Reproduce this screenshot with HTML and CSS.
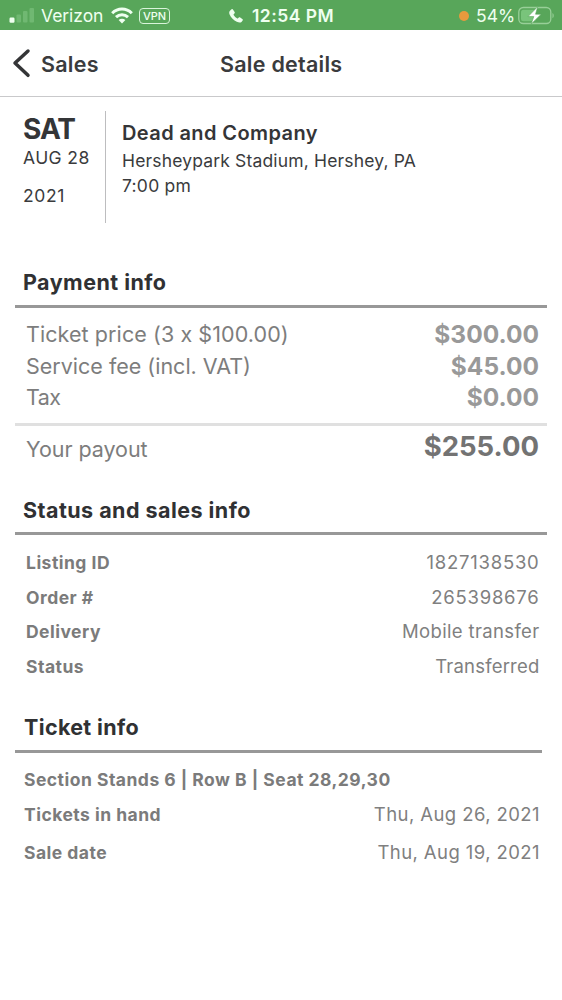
FILE: index.html
```html
<!DOCTYPE html>
<html lang="en">
<head>
<meta charset="utf-8">
<title>Sale details</title>
<link rel="stylesheet" href="styles.css">
</head>
<body>
<header class="status-bar">
  <div class="status-left">
    <svg class="signal" width="26" height="17" viewBox="0 0 26 17"><rect x=".5" y="11.500" width="5" height="5.300" rx="1.200" fill="#effff0"/><g fill="#70b872"><rect x="7.500" y="8.500" width="4.500" height="8" rx="1"/><rect x="14" y="5" width="4.500" height="11.500" rx="1"/><rect x="20.500" y="2" width="4.500" height="14.500" rx="1"/></g></svg>
    <span class="carrier">Verizon</span>
    <svg class="wifi" width="22" height="17" viewBox="0 0 22 17" fill="none" stroke="#effff0" stroke-width="3"><path d="M1.200 6.300C6.800.7 15.200.7 20.800 6.300"/><path d="M5 10.100c3.500-3.300 8.500-3.300 12 0"/><path d="M11 16.500 7.600 13.100c2-1.700 4.800-1.700 6.800 0z" fill="#effff0" stroke="none"/></svg>
    <span class="vpn">VPN</span>
  </div>
  <div class="status-time">
    <svg width="14" height="14" viewBox="0 0 14 14" fill="#effff0"><path d="M1.200 1.400 2.600.3C3.200-.1 3.700.1 4.100.7l1.500 2.200c.4.700.3 1.100-.3 1.700l-.6.6c-.3.3-.2.600.1 1.100.8 1.200 1.900 2.300 3.100 3 .5.300.8.300 1.100 0l.6-.6c.5-.5 1-.6 1.600-.2l2.100 1.500c.7.500.8 1 .3 1.600l-1.100 1.300c-1 1-2.800.8-4.700-.1C4.700 11.300 1.900 8.500.6 5.500-.1 3.700.1 2.300 1.200 1.400z"/></svg>
    <span>12:54 PM</span>
  </div>
  <div class="status-right">
    <span class="mic-dot"></span>
    <span class="percent">54%</span>
    <svg class="battery" width="37" height="20" viewBox="0 0 37 20"><rect x=".8" y="1.500" width="32" height="16" rx="4.500" fill="none" stroke="#98cf98" stroke-width="1.300"/><rect x="3" y="3.800" width="15" height="11.400" rx="2.500" fill="#79c47b"/><path d="M34.500 7c1.600.8 1.600 4.500 0 5.300z" fill="#98cf98"/><path d="M19.800.6 10 10.600h5.800l-2.600 7.400L23.200 8.200h-5.700z" fill="#fff" stroke="#58a65a" stroke-width=".6"/></svg>
  </div>
</header>
<nav class="nav-bar">
  <a class="back"><svg width="19" height="30" viewBox="0 0 19 30" fill="none" stroke="#343537" stroke-width="3.500" stroke-linecap="round" stroke-linejoin="round"><path d="M16 3 3 15l13 12.300"/></svg><span>Sales</span></a>
  <h1>Sale details</h1>
</nav>
<main>
  <section class="event">
    <div class="date"><strong>SAT</strong><span class="day">AUG 28</span><span class="year">2021</span></div>
    <div class="event-info"><h2>Dead and Company</h2><p class="venue">Hersheypark Stadium, Hershey, PA</p><p class="hour">7:00 pm</p></div>
  </section>
  <section class="payment">
    <h3>Payment info</h3>
    <dl class="prices">
      <div><dt class="ticket-price">Ticket price (3 x $100.00)</dt><dd>$300.00</dd></div>
      <div><dt>Service fee (incl. VAT)</dt><dd>$45.00</dd></div>
      <div><dt class="tax">Tax</dt><dd>$0.00</dd></div>
    </dl>
    <div class="payout"><span class="payout-label">Your payout</span><strong>$255.00</strong></div>
  </section>
  <section class="sales">
    <h3>Status and sales info</h3>
    <dl class="details">
      <div><dt>Listing ID</dt><dd class="number">1827138530</dd></div>
      <div><dt>Order #</dt><dd class="number">265398676</dd></div>
      <div><dt>Delivery</dt><dd>Mobile transfer</dd></div>
      <div><dt>Status</dt><dd class="state">Transferred</dd></div>
    </dl>
  </section>
  <section class="ticket">
    <h3>Ticket info</h3>
    <p class="seats">Section Stands 6 | Row B | Seat 28,29,30</p>
    <dl class="details ticket-dates">
      <div><dt>Tickets in hand</dt><dd>Thu, Aug 26, 2021</dd></div>
      <div><dt>Sale date</dt><dd>Thu, Aug 19, 2021</dd></div>
    </dl>
  </section>
</main>
</body>
</html>
```
FILE: styles.css
```css
* { box-sizing: border-box; margin: 0; padding: 0; }
body { width: 562px; min-height: 1000px; background: #fff; color: #3a3b3d; font-family: Inter, "Liberation Sans", sans-serif; white-space: nowrap; }
.status-bar { height: 30px; padding: 1px 6px 0 9px; background: #58a65a; color: #effff0; display: grid; grid-template-columns: 220px 1fr 97px; align-items: center; font-size: 17.500px; line-height: 28px; }
.status-left, .status-time, .status-right { display: flex; align-items: center; }
.signal { margin-right: 6px; margin-top: -2px; }
.carrier { width: 63px; letter-spacing: -.05px; }
.wifi { margin-left: 7px; }
.vpn { margin-left: 6px; width: 31px; height: 16px; border: 1.500px solid #d9f4da; border-radius: 4px; font-size: 11px; font-weight: 500; line-height: 14px; text-align: center; }
.status-time { gap: 9px; font-weight: 600; letter-spacing: .45px; }
.mic-dot { flex: none; width: 10px; height: 10px; border-radius: 50%; background: #e79a3d; }
.percent { flex: none; margin-left: 7px; width: 39px; }
.battery { flex: none; margin-left: 3px; }
.nav-bar { height: 67px; border-bottom: 1px solid #c9c9cb; display: grid; grid-template-columns: 208px 1fr; padding: 1px 12px 0; align-items: center; line-height: 30px; }
.nav-bar h1, .back { font-size: 21.500px; font-weight: 600; letter-spacing: .26px; }
.back { display: flex; align-items: center; gap: 10px; }
.back svg { margin-top: -2px; }
.event { height: 157px; padding: 14px 0 0 23px; display: flex; }
.date { width: 83px; height: 112px; border-right: 1px solid #bdbdbf; display: flex; flex-direction: column; }
.date strong { font-size: 28px; line-height: 36px; letter-spacing: -1px; color: #343537; }
.date span { font-size: 17.500px; line-height: 22px; letter-spacing: .4px; }
.date .year { margin-top: 16px; letter-spacing: .6px; }
.event-info { padding: 10px 0 0 16px; }
.event-info h2 { font-size: 20px; line-height: 25px; font-weight: 600; letter-spacing: .4px; color: #343537; }
.event-info p { font-size: 17.500px; line-height: 25px; letter-spacing: .16px; }
.event-info .venue { padding-top: 2px; }
.event-info .hour { letter-spacing: .25px; }
h3 { margin: 0 15px; padding-left: 8px; font-size: 21.500px; line-height: 30px; font-weight: 700; letter-spacing: .46px; color: #303133; border-bottom: 3px solid #989898; }
.payment { height: 230px; padding-top: 13px; }
.payment h3 { padding-bottom: 8px; }
.prices { margin: 0 15px; padding: 11px 8px 9px 11px; border-bottom: 3px solid #e0e0e0; }
.prices div { height: 31.500px; display: flex; justify-content: space-between; align-items: center; line-height: 31.500px; }
.prices dt, .payout-label { font-size: 21.500px; color: #7d7d7d; }
.prices .ticket-price { letter-spacing: .08px; }
.prices .tax { letter-spacing: -.6px; }
.prices dd { font-size: 24.500px; font-weight: 700; color: #999; }
.payout { padding: 4px 23px 0 26px; display: flex; justify-content: space-between; align-items: flex-start; line-height: 32px; }
.payout-label { padding-top: 3px; letter-spacing: -.05px; }
.payout strong { font-size: 27.500px; font-weight: 700; color: #737373; }
.sales { height: 216px; padding-top: 11px; }
.sales h3 { padding-bottom: 7px; }
.details { padding: 10px 22.500px 0 26px; }
.details div { display: flex; justify-content: space-between; height: 34.500px; line-height: 34.500px; }
.details dt, .seats { font-size: 17.500px; font-weight: 700; letter-spacing: .48px; color: #7b7b7b; }
.details dt { padding-top: 1px; }
.details dd { font-size: 18.500px; letter-spacing: .35px; color: #808080; }
.details .number { letter-spacing: .75px; }
.details .state { letter-spacing: .2px; }
.ticket { padding-top: 12px; }
.ticket h3 { margin-right: 20px; padding: 0 0 8px 9px; letter-spacing: .35px; }
.seats { padding: 10px 0 0 24px; line-height: 34px; }
.ticket-dates { padding: 0 22px 0 24px; }
.ticket-dates dd { letter-spacing: .42px; }
.ticket-dates div + div { margin-top: 3px; }
```
